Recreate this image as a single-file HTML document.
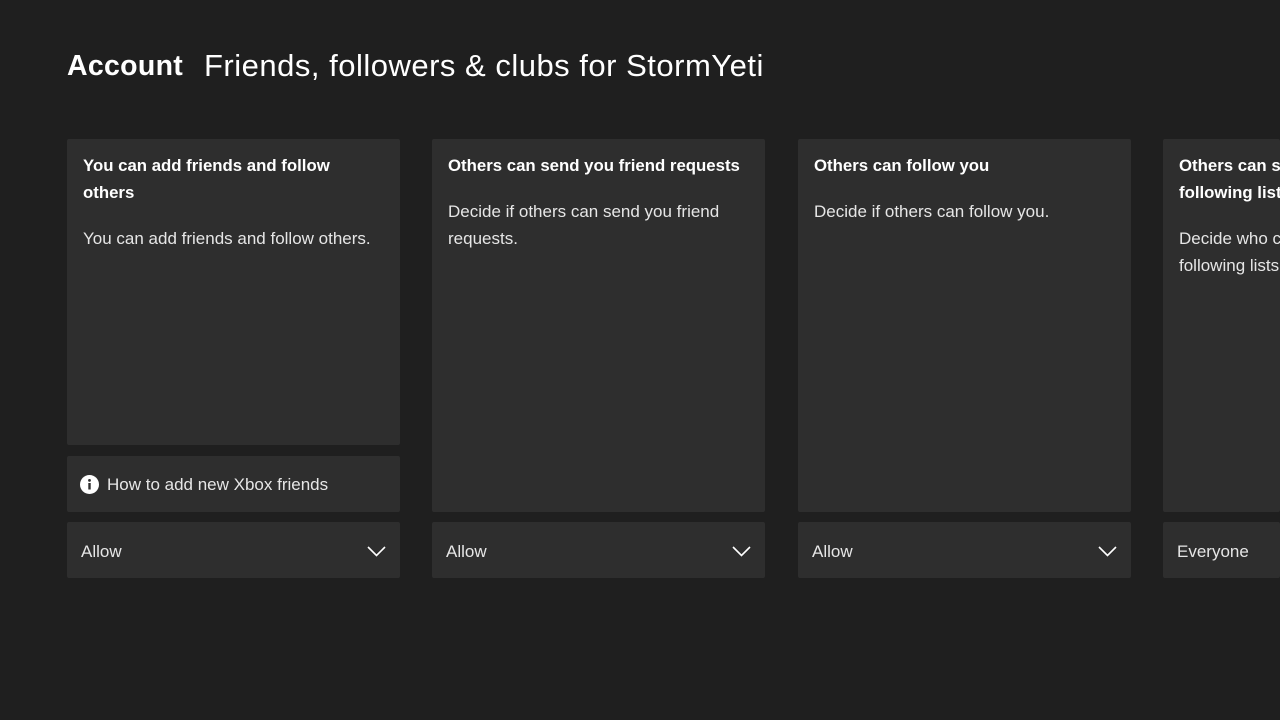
<!DOCTYPE html>
<html><head><meta charset="utf-8"><style>
*{margin:0;padding:0;box-sizing:border-box}
html,body{width:1280px;height:720px;overflow:hidden}
body{background:#1f1f1f;position:relative;font-family:"Liberation Sans",sans-serif;color:#fff}
.t{position:absolute;top:46px;font-size:30px;line-height:40px;white-space:nowrap}
.c{position:absolute;background:#2e2e2e;border-radius:2px;overflow:hidden}
.c h3{position:absolute;left:16px;top:13px;width:300px;font-size:16.8px;line-height:27px;font-weight:bold;white-space:normal}
.c p{position:absolute;left:16px;width:300px;font-size:17px;line-height:27px;color:#e6e6e6}
.d{position:absolute;top:522px;height:56px;background:#2e2e2e;border-radius:2px;font-size:17px;color:#e6e6e6;line-height:60px;padding-left:14px;overflow:hidden;white-space:nowrap}
.d svg{position:absolute;right:14px;top:24px}
</style></head><body>
<div class="t" style="left:67px;font-weight:bold;font-size:28.5px;letter-spacing:0.3px">Account</div>
<div class="t" style="left:204px;font-size:31px;letter-spacing:0.5px">Friends, followers &amp; clubs for StormYeti</div>

<div class="c" style="left:67px;top:139px;width:333px;height:306px">
<h3 style="width:270px">You can add friends and follow others</h3>
<p style="top:86px">You can add friends and follow others.</p></div>
<div class="c" style="left:67px;top:456px;width:333px;height:56px">
<svg style="position:absolute;top:19px;left:13px" width="19" height="19" viewBox="0 0 19 19"><circle cx="9.5" cy="9.5" r="9.5" fill="#fff"/><rect x="8.3" y="8" width="2.4" height="6.5" fill="#2e2e2e"/><circle cx="9.5" cy="5.4" r="1.4" fill="#2e2e2e"/></svg>
<div style="position:absolute;left:40px;top:0;line-height:58px;font-size:17px;color:#e6e6e6">How to add new Xbox friends</div></div>
<div class="d" style="left:67px;width:333px">Allow<svg width="19" height="11" viewBox="0 0 19 11"><path d="M1 1l8.5 8.5L18 1" stroke="#fff" stroke-width="1.6" fill="none"/></svg></div>

<div class="c" style="left:432px;top:139px;width:333px;height:373px">
<h3>Others can send you friend requests</h3>
<p style="top:59px">Decide if others can send you friend requests.</p></div>
<div class="d" style="left:432px;width:333px">Allow<svg width="19" height="11" viewBox="0 0 19 11"><path d="M1 1l8.5 8.5L18 1" stroke="#fff" stroke-width="1.6" fill="none"/></svg></div>

<div class="c" style="left:798px;top:139px;width:333px;height:373px">
<h3>Others can follow you</h3>
<p style="top:59px">Decide if others can follow you.</p></div>
<div class="d" style="left:798px;width:333px">Allow<svg width="19" height="11" viewBox="0 0 19 11"><path d="M1 1l8.5 8.5L18 1" stroke="#fff" stroke-width="1.6" fill="none"/></svg></div>

<div class="c" style="left:1163px;top:139px;width:117px;height:373px">
<h3 style="white-space:nowrap">Others can see your friends and<br>following lists</h3>
<p style="top:86px;white-space:nowrap">Decide who can see your friends and<br>following lists.</p></div>
<div class="d" style="left:1163px;width:117px">Everyone</div>
</body></html>
